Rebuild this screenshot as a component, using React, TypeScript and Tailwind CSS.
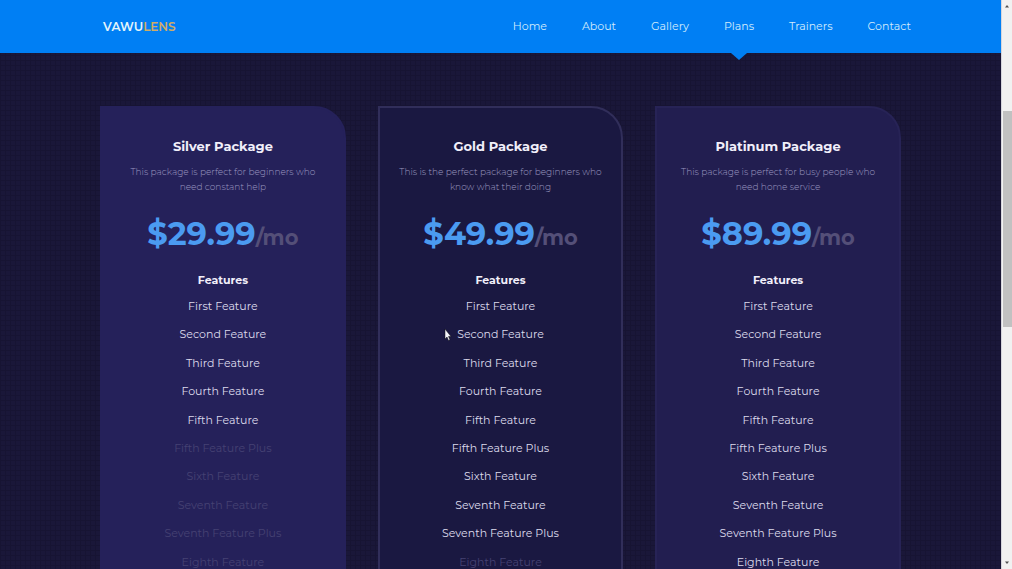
import React from "react";

type Plan = {
  name: string;
  blurb: string;
  price: string;
  included: number;
  card: string;
};

const links = ["Home", "About", "Gallery", "Plans", "Trainers", "Contact"];

const features = [
  "First Feature",
  "Second Feature",
  "Third Feature",
  "Fourth Feature",
  "Fifth Feature",
  "Fifth Feature Plus",
  "Sixth Feature",
  "Seventh Feature",
  "Seventh Feature Plus",
  "Eighth Feature",
];

const plans: Plan[] = [
  {
    name: "Silver Package",
    blurb: "This package is perfect for beginners who need constant help",
    price: "$29.99",
    included: 5,
    card: "border-[#25215a] bg-[#25215a]",
  },
  {
    name: "Gold Package",
    blurb: "This is the perfect package for beginners who know what their doing",
    price: "$49.99",
    included: 9,
    card: "border-[#312e5a] bg-[#1a1841]",
  },
  {
    name: "Platinum Package",
    blurb: "This package is perfect for busy people who need home service",
    price: "$89.99",
    included: 10,
    card: "border-[#272356] bg-[#221e50]",
  },
];

function Header() {
  return (
    <header className="relative z-10 bg-[#007ff4]">
      <div className="mx-auto flex h-[53px] w-4/5 items-center justify-between pl-[3px]">
        <a href="#home" className="text-xs font-semibold text-[#e4f6fb]">
          VAWU<span className="text-[#d0ac66]">LENS</span>
        </a>
        <nav aria-label="Main" className="-mr-[10px] flex h-full gap-[35px]">
          {links.map((link) => (
            <a
              key={link}
              href={"#" + link.toLowerCase()}
              className="relative flex items-center text-[11px] text-[#d2ebfc]"
            >
              {link}
              {link === "Plans" && (
                <span className="absolute top-full left-1/2 h-0 w-0 -translate-x-1/2 border-x-[8px] border-t-[7px] border-x-transparent border-t-[#007ff4]" />
              )}
            </a>
          ))}
        </nav>
      </div>
    </header>
  );
}

function PlanCard({ plan }: { plan: Plan }) {
  return (
    <article
      className={"flex flex-col items-center rounded-tr-[32px] border-2 px-4 pt-7 pb-8 text-center " + plan.card}
    >
      <h2 className="text-[13px] leading-5 font-bold text-[#f1effa]">{plan.name}</h2>
      <p className="mt-2 max-w-[206px] text-[9px] leading-[15px] font-light text-[#9c98c0]">
        {plan.blurb}
      </p>
      <p className="mt-5 text-[32px] leading-10 font-bold whitespace-nowrap text-[#4b9bf1]">
        {plan.price}
        <span className="text-[21px] font-bold text-[#544f78]">/mo</span>
      </p>
      <h3 className="mt-3 text-[11px] leading-5 font-bold text-[#f1effa]">Features</h3>
      <ul className="mt-[2px] flex min-h-[284px] flex-col text-[11px]">
        {features.map((feature, i) => (
          <li
            key={feature}
            className={
              i < plan.included
                ? "flex flex-1 items-center justify-center text-[#dddbec]"
                : "flex flex-1 items-center justify-center text-[#464273]"
            }
          >
            {feature}
          </li>
        ))}
      </ul>
    </article>
  );
}

function ScrollTrack() {
  return (
    <div aria-hidden="true" className="flex w-[11px] shrink-0 flex-col items-center border-l border-[#d5d5dc] bg-[#f1f1f1]">
      <svg className="h-[11px] w-[6px] shrink-0" viewBox="0 0 6 11">
        <path d="M1 7.5 3 5l2 2.5z" fill="#505050" />
      </svg>
      <div className="basis-[100px]" />
      <div className="w-[9px] basis-[216px] bg-[#c1c1c1]" />
      <div className="flex-1" />
      <svg className="h-[11px] w-[6px] shrink-0" viewBox="0 0 6 11">
        <path d="M1 3.5 3 6l2-2.5z" fill="#505050" />
      </svg>
    </div>
  );
}

export default function App() {
  return (
    <div className="relative flex h-screen overflow-hidden bg-[#1a1739] font-['Montserrat','Inter',sans-serif]">
      <div className="min-w-0 flex-1 overflow-hidden bg-[linear-gradient(#171433_1px,transparent_1px),linear-gradient(90deg,#171433_1px,transparent_1px)] bg-[size:5px_5px]">
        <Header />
        <main className="mx-auto grid w-4/5 grid-cols-3 gap-8 pt-[53px]">
          {plans.map((plan) => (
            <PlanCard key={plan.name} plan={plan} />
          ))}
        </main>
      </div>
      <ScrollTrack />
      <svg aria-hidden="true" className="absolute top-[329px] left-[444px] h-3 w-2" viewBox="0 0 8 12">
        <path d="M1 0v10l2-2 1.500 3.500 1.500-.7-1.500-3.300H7z" fill="#f5f5fa" stroke="#111" strokeWidth=".5" />
      </svg>
    </div>
  );
}
